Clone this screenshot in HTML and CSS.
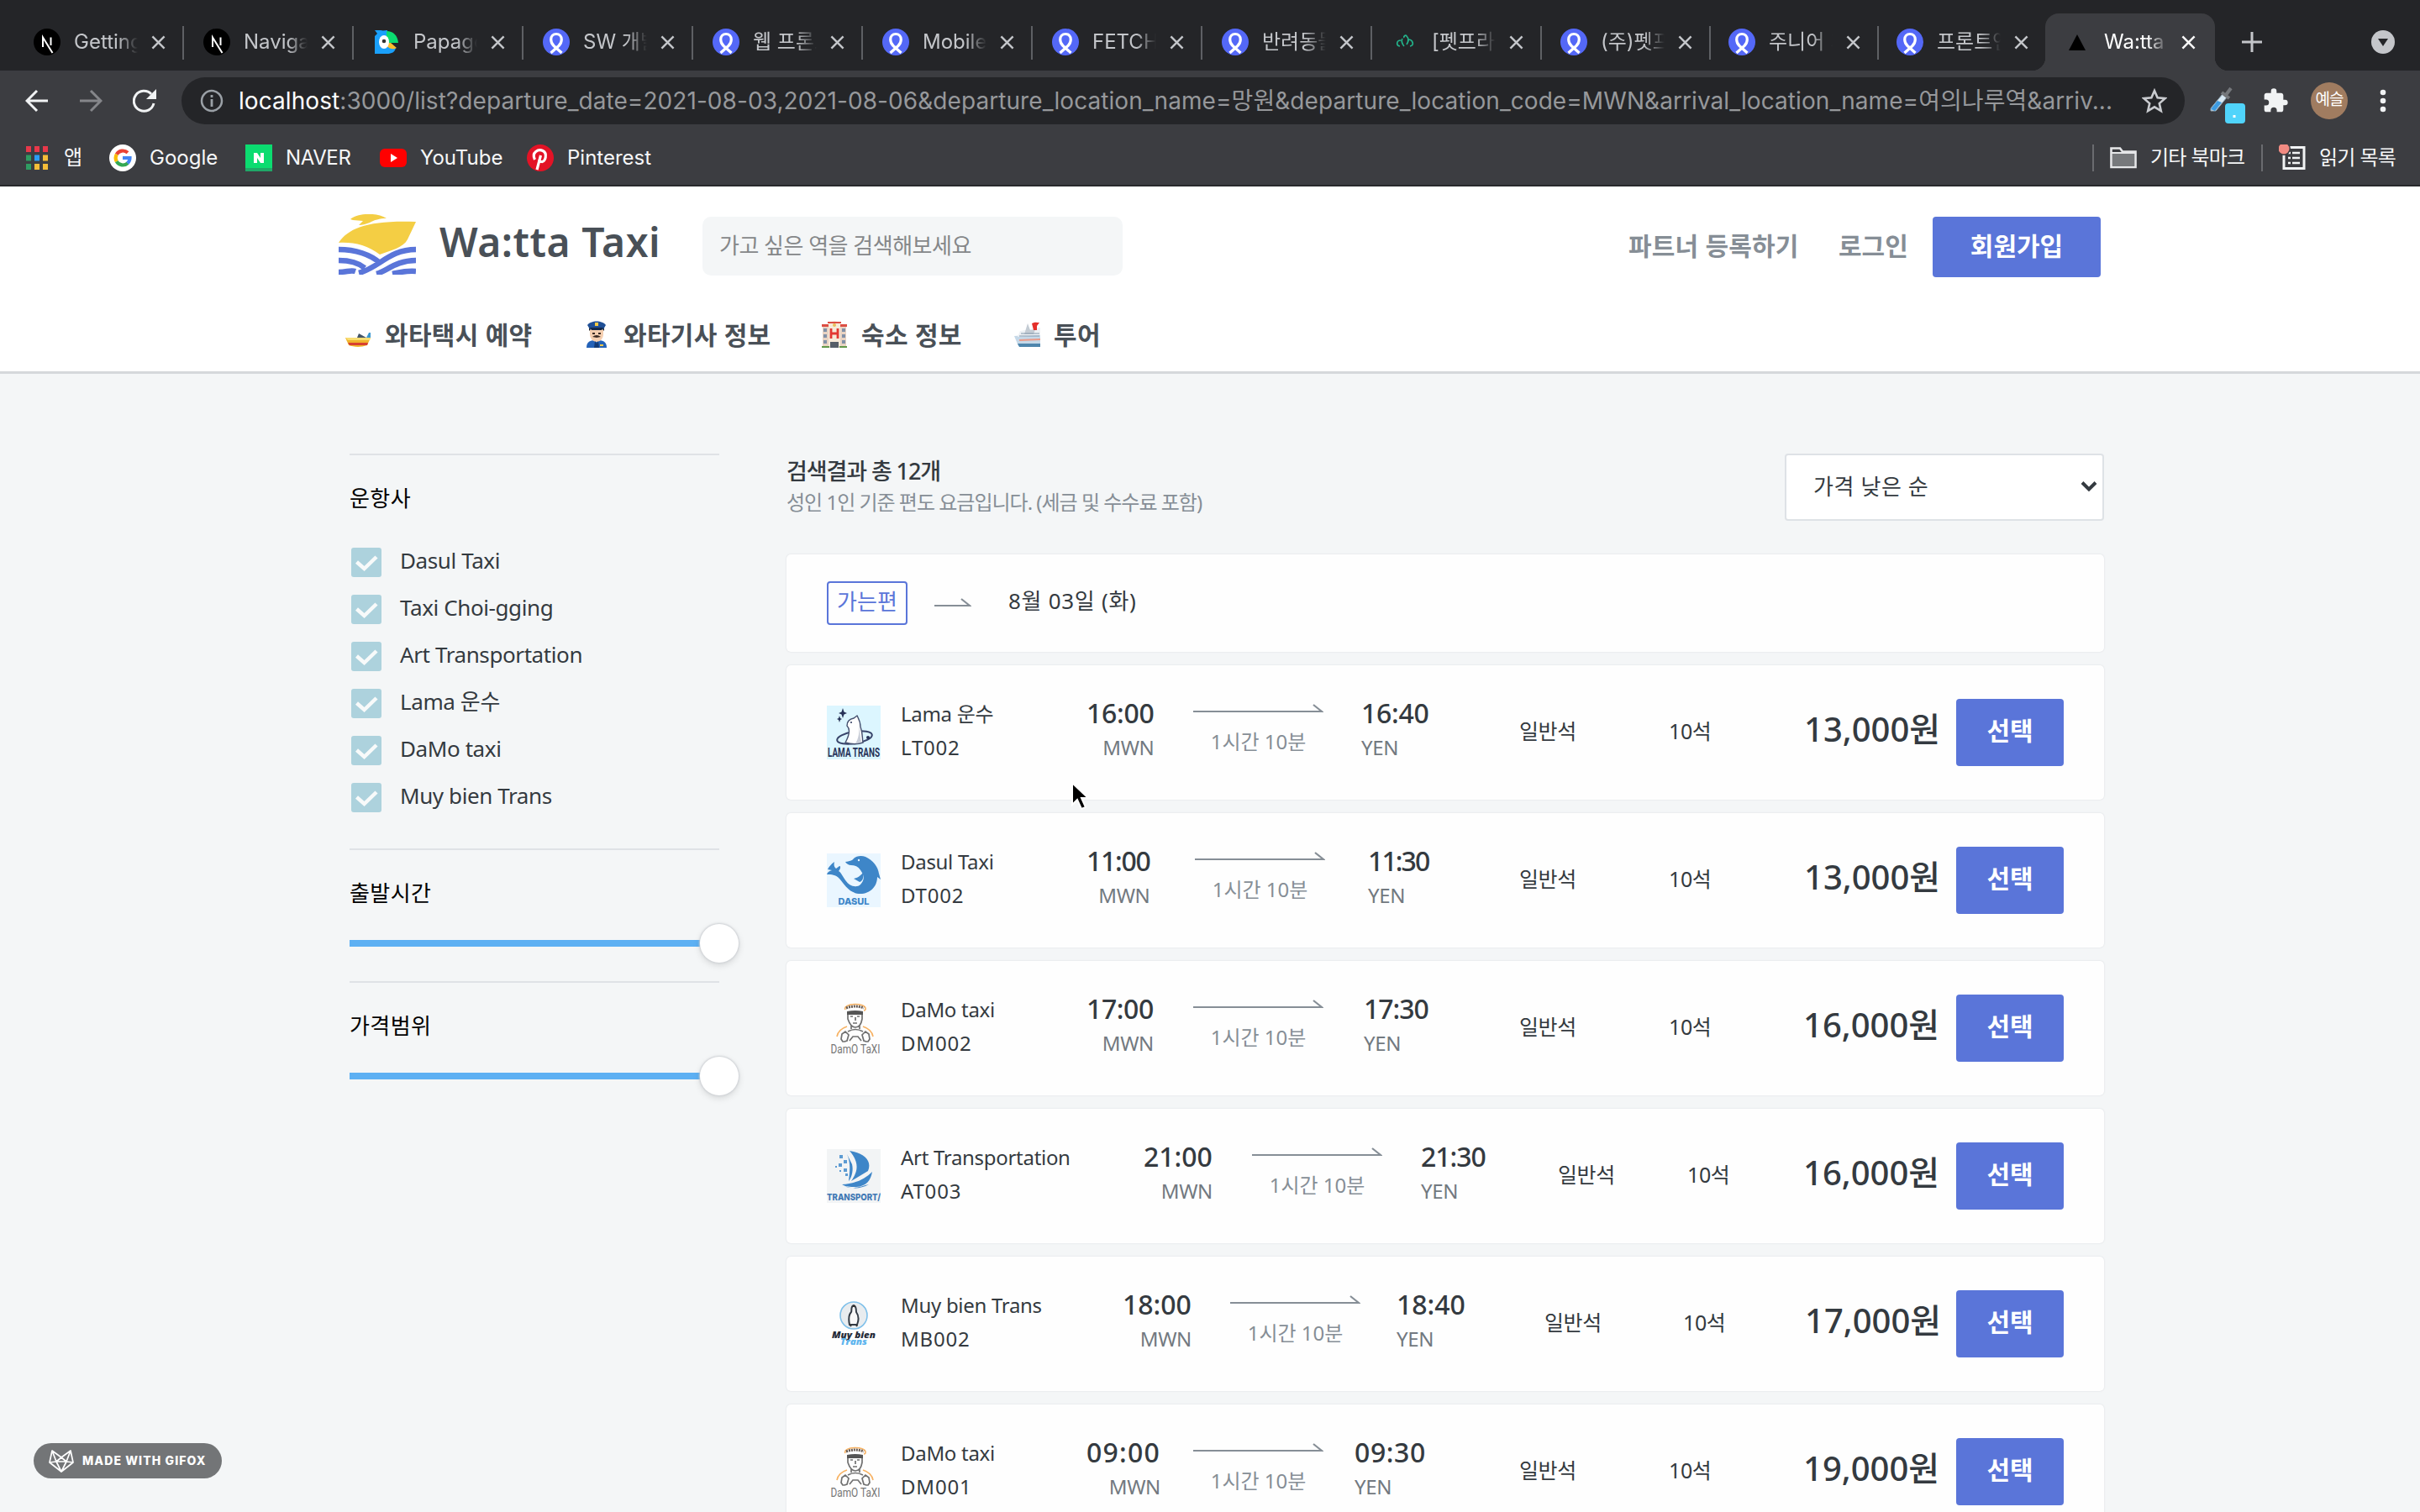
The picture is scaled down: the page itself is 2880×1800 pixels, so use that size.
FILE: index.html
```html
<!DOCTYPE html>
<html lang="ko">
<head>
<meta charset="utf-8">
<title>Wa:tta Taxi</title>
<link rel="stylesheet" href="styles.css">
</head>
<body>
<svg class="defs" width="0" height="0">
  <symbol id="x" viewBox="0 0 18 18"><path d="M1.5 1.5l15 15M16.500 1.500l-15 15" fill="none" stroke="currentColor" stroke-width="2.600"/></symbol>
  <symbol id="next" viewBox="0 0 32 32"><circle cx="16" cy="16" r="16" fill="#000"/><path d="M11 22V10.500L22.500 29M20.500 10.500V20" fill="none" stroke="#fff" stroke-width="2"/></symbol>
  <symbol id="rocket" viewBox="0 0 32 32"><circle cx="16" cy="16" r="16" fill="#5468f7"/><path d="M9.500 29L19 20.500c2.500-2.500 3.300-5 3.300-7.500 0-4-2.500-6.500-6.300-6.500S9.700 9 9.700 13c0 2.500.8 5 3.300 7.500L22.500 29" fill="none" stroke="#fff" stroke-width="3.200"/></symbol>
  <symbol id="papago" viewBox="0 0 32 32"><path d="M2 2h7c3 1 5 0 8 0v14l6 8c2 0 4-1 4-1-1 5-5 7-10 7H2V9L5 6z" fill="#1aa0fb"/><path d="M16 3c8 0 13 5 14 14H16z" fill="#0bdc70"/><path d="M16 17h5l7 6c-5 3-9 0-12-2z" fill="#fdbd2c"/><ellipse cx="13" cy="16" rx="6" ry="8" fill="#fff"/><circle cx="13" cy="15" r="2.300" fill="#333"/></symbol>
  <symbol id="leaf" viewBox="0 0 32 32"><path d="M15 11c-1-2 2-4 3-2 3 3 2 7 0 10M13 12c-2 2 0 7 2 9M11 14c-5 0-6 6-1 7M20 13c5 0 8 7 2 8" fill="none" stroke="#23b58c" stroke-width="1.700"/></symbol>
  <symbol id="wattalogo" viewBox="0 0 92 72"><path d="M0 34C12 16 36 7 92 9L82 30C77 40 62 43 49 48C34 37 18 33 0 34z" fill="#f4ce44"/><path d="M14 6c8-7 30-9 43-1-8 0-15 2-20 5-5 2-9 3-13 3l5-5-12-1z" fill="#f4ce44"/><g fill="none" stroke="#5a75d9" stroke-width="6.500"><path d="M0 42c20 0 38 6 49 16M92 42C60 42 48 64 24 70M0 55c14 0 25 4 31 9M92 55C68 55 57 68 45 71M0 69c10 0 14-3 20-1M92 68c-12-1-18 1-28 3"/></g></symbol>
  <symbol id="half" viewBox="0 0 155 12"><path d="M0 10H153L143 2" fill="none" stroke="#868e96" stroke-width="2.200"/></symbol>
  <symbol id="check" viewBox="0 0 36 35"><rect width="36" height="35" rx="3" fill="#add2dd"/><path d="M6.500 17l9 8L30 11" fill="none" stroke="#f8fafa" stroke-width="4.500"/></symbol>
</svg>

<div class="browser">
  <div class="tabs">
    <div class="tab"><svg class="fav"><use href="#next"/></svg><span>Getting</span><svg class="x"><use href="#x"/></svg></div>
    <div class="tab"><svg class="fav"><use href="#next"/></svg><span>Naviga</span><svg class="x"><use href="#x"/></svg></div>
    <div class="tab"><svg class="fav"><use href="#papago"/></svg><span>Papago</span><svg class="x"><use href="#x"/></svg></div>
    <div class="tab"><svg class="fav"><use href="#rocket"/></svg><span>SW 개발</span><svg class="x"><use href="#x"/></svg></div>
    <div class="tab"><svg class="fav"><use href="#rocket"/></svg><span>웹 프론트</span><svg class="x"><use href="#x"/></svg></div>
    <div class="tab"><svg class="fav"><use href="#rocket"/></svg><span>Mobile</span><svg class="x"><use href="#x"/></svg></div>
    <div class="tab"><svg class="fav"><use href="#rocket"/></svg><span>FETCH</span><svg class="x"><use href="#x"/></svg></div>
    <div class="tab"><svg class="fav"><use href="#rocket"/></svg><span>반려동물</span><svg class="x"><use href="#x"/></svg></div>
    <div class="tab"><svg class="fav"><use href="#leaf"/></svg><span>[펫프라이</span><svg class="x"><use href="#x"/></svg></div>
    <div class="tab tab-b"><svg class="fav"><use href="#rocket"/></svg><span>(주)펫프</span><svg class="x"><use href="#x"/></svg></div>
    <div class="tab tab-c"><svg class="fav"><use href="#rocket"/></svg><span>주니어 개</span><svg class="x"><use href="#x"/></svg></div>
    <div class="tab tab-c tab-last"><svg class="fav"><use href="#rocket"/></svg><span>프론트엔</span><svg class="x"><use href="#x"/></svg></div>
    <div class="tab tab-c tab-active"><svg class="fav" viewBox="0 0 32 32"><path d="M16 7L6 26h20z" fill="#000"/></svg><span>Wa:tta T</span><svg class="x"><use href="#x"/></svg></div>
    <svg class="plus" viewBox="0 0 24 24"><path d="M12 0v24M0 12h24" stroke="#c4c6ca" stroke-width="3"/></svg>
    <svg class="more" viewBox="0 0 28 28"><circle cx="14" cy="14" r="14" fill="#c4c6ca"/><path d="M8 10h12l-6 9z" fill="#242528"/></svg>
  </div>

  <div class="toolbar">
    <svg class="arrow" viewBox="0 0 28 28"><path d="M27 14H3M14 2L2 14l12 12" fill="none" stroke="#f1f3f4" stroke-width="3"/></svg>
    <svg class="arrow" viewBox="0 0 28 28"><path d="M1 14h24M14 2l12 12-12 12" fill="none" stroke="#85868a" stroke-width="3"/></svg>
    <svg class="arrow" viewBox="0 0 28 28"><path d="M25 17a12 12 0 1 1-3-11" fill="none" stroke="#f1f3f4" stroke-width="3"/><path d="M28 0v12H16z" fill="#f1f3f4"/></svg>
    <div class="address">
      <svg class="info" viewBox="0 0 28 28"><circle cx="14" cy="14" r="12" fill="none" stroke="#9aa0a6" stroke-width="2.500"/><path d="M14 12v9M14 7v3" stroke="#9aa0a6" stroke-width="2.800"/></svg>
      <span class="url"><b>localhost</b>:3000/list?departure_date=2021-08-03,2021-08-06&amp;departure_location_name=망원&amp;departure_location_code=MWN&amp;arrival_location_name=여의나루역&amp;arriv...</span>
      <svg class="star" viewBox="0 0 30 30"><path d="M15 3l3.600 8.300 9 .8-6.800 6 2 8.900L15 22.300 7.200 27l2-8.900-6.800-6 9-.8z" fill="none" stroke="#c9cbcf" stroke-width="2.600"/></svg>
    </div>
    <svg class="dropper" viewBox="0 0 44 46"><path d="M3 28L17 11l5 4L9 31H3z" fill="#d8e9f4" stroke="#8aa0ae"/><path d="M3 29l8-10 5 2-8 10z" fill="#3e9be0"/><path d="M16 9l9 7M21 12l6-8" stroke="#74777b" stroke-width="4" fill="none"/><rect x="20" y="22" width="24" height="24" rx="4" fill="#50d4fb"/><path d="M31 36v3" stroke="#fff" stroke-width="3"/></svg>
    <svg class="puzzle" viewBox="0 0 24 24"><path d="M20.500 11H19V7c0-1.100-.9-2-2-2h-4V3.500a2.500 2.500 0 0 0-5 0V5H4c-1.100 0-2 .9-2 2v3.800h1.500a2.700 2.700 0 0 1 0 5.400H2V20c0 1.100.9 2 2 2h3.800v-1.500a2.700 2.700 0 0 1 5.400 0V22H17c1.100 0 2-.9 2-2v-4h1.500a2.500 2.500 0 0 0 0-5z" fill="#f1f3f4"/></svg>
    <span class="avatar">예슬</span>
    <svg class="kebab" viewBox="0 0 8 28"><circle cx="4" cy="4" r="3.300"/><circle cx="4" cy="14" r="3.300"/><circle cx="4" cy="24" r="3.300"/></svg>
  </div>

  <div class="bookmarks">
    <svg class="apps" viewBox="0 0 26 28"><path d="M0 0h6v7H0zM10 0h6v7h-6zM20 0h6v7h-6z" fill="#e8384a"/><path d="M0 10.500h6v7H0zM0 21h6v7H0z" fill="#2f9c62"/><path d="M10 10.500h6v7h-6z" fill="#2b9df4"/><path d="M20 10.500h6v7h-6zM10 21h6v7h-6zM20 21h6v7h-6z" fill="#f6bd38"/></svg>
    <span class="bm-apps">앱</span>
    <svg class="bm-ic" viewBox="0 0 32 32"><circle cx="16" cy="16" r="16" fill="#fff"/><g fill="none" stroke-width="4.200"><path d="M8.800 11.800A8.500 8.500 0 0 1 22 9.800" stroke="#ea4335"/><path d="M8.800 20.200a8.500 8.500 0 0 1 0-8.400" stroke="#fbbc05"/><path d="M22 22.200A8.500 8.500 0 0 1 8.800 20.200" stroke="#34a853"/><path d="M16 16h8.500a8.500 8.500 0 0 1-2.700 6.200" stroke="#4285f4"/></g></svg>
    <span class="bm-google">Google</span>
    <svg class="bm-ic" viewBox="0 0 32 32"><path d="M0 0h32v32H0z" fill="#0bdc70"/><path d="M0 28h32v4H0z" fill="#20a868"/><path d="M10 22V10h4l4 6v-6h4v12h-4l-4-6v6z" fill="#fff"/></svg>
    <span class="bm-naver">NAVER</span>
    <svg class="bm-ic" viewBox="0 0 32 32"><rect y="5" width="32" height="22" rx="6" fill="#f00"/><path d="M13 11l8 5-8 5z" fill="#fff"/></svg>
    <span class="bm-yt">YouTube</span>
    <svg class="bm-ic" viewBox="0 0 32 32"><circle cx="16" cy="16" r="16" fill="#e31326"/><path d="M12 30l4.500-17M9.500 18C5 9 14 5 19 7.500c6 3 3 14-1.500 13-2 0-3-1.500-3-2" fill="none" stroke="#fff" stroke-width="3.200"/></svg>
    <span>Pinterest</span>
    <div class="bm-right">
      <i></i>
      <svg class="bm-ic folder" viewBox="0 0 32 32"><path d="M1.500 27V4.500H12l3 4h15.500V27z" fill="none" stroke="#e6e7e9" stroke-width="2.600"/><path d="M3 11h26v15H3z" fill="#77797c"/><path d="M2 10h28" stroke="#e6e7e9" stroke-width="2"/></svg>
      <span class="bm-other">기타 북마크</span>
      <i></i>
      <svg class="bm-ic list" viewBox="0 0 32 32"><path d="M6 3.500h24v25H6z" fill="none" stroke="#f1f3f4" stroke-width="3"/><path d="M11 10h3M16 10h9M11 16h3M16 16h9M11 22h3M16 22h9" stroke="#f1f3f4" stroke-width="2.500"/><circle cx="6" cy="5" r="8" fill="#3c3d41"/><circle cx="6" cy="5" r="6.500" fill="#f28b82"/></svg>
      <span class="bm-read">읽기 목록</span>
    </div>
  </div>
</div>

<header class="site">
  <div class="top">
    <svg class="logo"><use href="#wattalogo"/></svg>
    <h1>Wa:tta Taxi</h1>
    <div class="search">가고 싶은 역을 검색해보세요</div>
    <a class="link partner">파트너 등록하기</a>
    <a class="link login">로그인</a>
    <a class="signup">회원가입</a>
  </div>
  <nav>
    <svg class="emo" viewBox="0 0 32 32"><path d="M1 20h30l-4 9c-8 3-17 2-22 0z" fill="#f0b52c"/><path d="M1 20h30l-1 3H4z" fill="#f8dd72"/><path d="M4 26h24l-1 3H6z" fill="#d8402f"/><path d="M15 20l2-5 9 5z" fill="#456"/><path d="M26 20l3-6h2v6z" fill="#3b97cf"/></svg>
    <span class="n1">와타택시 예약</span>
    <svg class="emo" viewBox="0 0 32 32"><path d="M4 32c0-8 5-9 12-9s12 1 12 9z" fill="#2462b8"/><path d="M8 8h16v8c0 5-4 9-8 9s-8-4-8-9z" fill="#f5cfb0"/><path d="M7 8h18v4l-2-2H9l-2 2z" fill="#222"/><path d="M5 5c4-6 18-6 22 0l-3 5H8z" fill="#1f4f96"/><path d="M8 8h16l-2 3H10z" fill="#15294a"/><path d="M14 2h4v4h-4zM20 28h4v2h-4z" fill="#f5c944"/><path d="M11 19q5-4 10 0l-5 1zM11 14h3v2h-3zM18 14h3v2h-3z" fill="#3b2b24"/><path d="M14 24l2 3 2-3 1 8h-6z" fill="#123a75"/></svg>
    <span class="n2">와타기사 정보</span>
    <svg class="emo" viewBox="0 0 32 32"><path d="M2 5h28v27H2z" fill="#e9d3c3"/><path d="M9 2l7-2 7 2v30H9z" fill="#f6ead9"/><path d="M1 4h8v3H1zM23 4h8v3h-8zM8 1h16v2H8z" fill="#dc4e43"/><path d="M3 9h4v4H3zM3 16h4v4H3zM3 23h4v4H3zM25 9h4v4h-4zM25 16h4v4h-4zM25 23h4v4h-4z" fill="#8292a8"/><path d="M12 9v12M20 9v12M12 15h8" stroke="#e33832" stroke-width="2.800"/><circle cx="16" cy="5" r="2" fill="#e9bd58"/><path d="M11 25h10v7H11z" fill="#555e68"/><path d="M1 30h9v2H1zM22 30h9v2h-9z" fill="#62994a"/></svg>
    <span class="n3">숙소 정보</span>
    <svg class="emo" viewBox="0 0 32 32"><path d="M1 18l31-2v14H6z" fill="#c5d8e8"/><path d="M5 27h27v4H7z" fill="#4f86ad"/><path d="M8 12l24-4v9L5 19z" fill="#edf1f5"/><path d="M17 3l3 8 6-1-2 6H13z" fill="#c4ccd4"/><path d="M22 3c4-2 6-1 9-1l-3 4v5h-4z" fill="#e42f2a"/><path d="M7 23l25-1" stroke="#eb9a88" stroke-width="2"/><path d="M9 15h22M7 18h24" stroke="#8297ab" stroke-width="1"/></svg>
    <span>투어</span>
  </nav>
</header>

<main>
  <aside>
    <section class="companies">
      <h3>운항사</h3>
      <label><svg><use href="#check"/></svg>Dasul Taxi</label>
      <label><svg><use href="#check"/></svg>Taxi Choi-gging</label>
      <label><svg><use href="#check"/></svg>Art Transportation</label>
      <label><svg><use href="#check"/></svg>Lama 운수</label>
      <label><svg><use href="#check"/></svg>DaMo taxi</label>
      <label><svg><use href="#check"/></svg>Muy bien Trans</label>
    </section>
    <section class="range"><h3>출발시간</h3><div class="slider"><b></b></div></section>
    <section class="range"><h3>가격범위</h3><div class="slider"><b></b></div></section>
  </aside>

  <div class="results">
    <div class="head">
      <div><h2>검색결과 총 12개</h2><p>성인 1인 기준 편도 요금입니다. (세금 및 수수료 포함)</p></div>
      <div class="select">가격 낮은 순<svg viewBox="0 0 20 14"><path d="M2 2.500l8 8 8-8" fill="none" stroke="#343a40" stroke-width="4"/></svg></div>
    </div>
    <div class="card date">
      <span class="badge">가는편</span>
      <svg viewBox="0 0 44 12"><path d="M0 10H42L32 2" fill="none" stroke="#868e96" stroke-width="2.200"/></svg>
      <span class="day">8월 03일 (화)</span>
    </div>
    <div class="card trip lt">
      <svg class="co" viewBox="0 0 64 64"><rect width="64" height="64" fill="#dcf6ff"/><path d="M19 3l1.500 4.500L24 9l-3.500 1.500L19 15l-1.500-4.500L14 9l3.500-1.500zM15 12l1 3 2 1-2 1-1 3-1-3-2-1 2-1z" fill="#273258"/><ellipse cx="33" cy="38" rx="21" ry="7" transform="rotate(-9 33 38)" fill="none" stroke="#39456b" stroke-width="2"/><path d="M22 44c5-9 6-16 2-20 0-5 2-8 8-9l4-3c2 4 4 7 4 13 3 8 2 14 3 19-8 3-14 2-21 0z" fill="#fff" stroke="#45516f" stroke-width="1.400"/><path d="M38 22c2 8 1 14 3 21l-7 2c4-6 5-14 4-23z" fill="#c9ced8"/><circle cx="29" cy="20" r="1" fill="#273258"/><circle cx="49" cy="38" r="2" fill="#273258"/><text x="32" y="61" textLength="62" lengthAdjust="spacingAndGlyphs" text-anchor="middle" font-family="Roboto, sans-serif" font-size="15" font-weight="700" fill="#273258">LAMA TRANS</text></svg>
      <div class="name"><span>Lama 운수</span><span>LT002</span></div>
      <div class="dep"><b>16:00</b><span>MWN</span></div>
      <div class="dur"><svg><use href="#half"/></svg><span>1시간 10분</span></div>
      <div class="arv"><b>16:40</b><span>YEN</span></div>
      <span class="seat">일반석</span><span class="left">10석</span><strong>13,000원</strong><a class="pick">선택</a>
    </div>
    <div class="card trip dt">
      <svg class="co" viewBox="0 0 64 64"><rect width="64" height="64" fill="#eaf6ff"/><path d="M22 10c5-1 8-1 10-4 3-3 9-4 14-2 9 4 15 12 16 20l2 7-4-3c0 12-9 20-20 20-13 0-19-11-25-18-5-5-9-5-15-5 1-3 3-4 6-5l-5-1c2-4 4-6 8-9-1 5 0 6 2 8l4-3c2 0 1 4-1 6 4 2 7 12 13 16 5 3 10 3 13 0 4-4 5-9 2-14-3-6-7-9-13-9-3 0-6-2-7-4z" fill="#3e86c8"/><path d="M32 30c5-1 7-3 11-7 1 5 0 10-4 11z" fill="#3e86c8"/><circle cx="38" cy="8" r="1.200" fill="#eaf6ff"/><text x="32" y="61" text-anchor="middle" font-family="Inter, sans-serif" font-size="10.500" font-weight="800" textLength="37" lengthAdjust="spacingAndGlyphs" fill="#3e86c8">DASUL</text></svg>
      <div class="name"><span>Dasul Taxi</span><span>DT002</span></div>
      <div class="dep"><b>11:00</b><span>MWN</span></div>
      <div class="dur"><svg><use href="#half"/></svg><span>1시간 10분</span></div>
      <div class="arv"><b>11:30</b><span>YEN</span></div>
      <span class="seat">일반석</span><span class="left">10석</span><strong>13,000원</strong><a class="pick">선택</a>
    </div>
    <div class="card trip dm">
      <svg class="co" viewBox="0 0 64 64"><path d="M22 10c-4-8 25-9 24-1 0 1-1 2-2 2M12 42c1-6 6-10 12-12M55 42c-1-6-6-10-12-12" fill="none" stroke="#f7b263" stroke-width="1.600"/><path d="M23 8q11-4 21 0" stroke="#665a52" fill="none" stroke-width="3" stroke-dasharray="2 1"/><path d="M24 12q10-2 19 0v4H24z" fill="#555"/><path d="M25 16v5c2 6 5 10 9 10s7-4 8-10v-5M29 29v4M39 29v4M28 18h3M36 18h3M34 19v4M31 26h5M19 48l-2-3 1-6 4-3 4 4-2 7-3 1zM49 48l2-3-1-6-4-3-4 4 2 7 3 1zM25 36q9-5 18 0M27 47l4-5h6l4 5" fill="none" stroke="#707070" stroke-width="1.700"/><text x="34" y="61.500" text-anchor="middle" font-family="Roboto, sans-serif" font-size="15" textLength="59" lengthAdjust="spacingAndGlyphs" fill="#777">DamO TaXI</text></svg>
      <div class="name"><span>DaMo taxi</span><span>DM002</span></div>
      <div class="dep"><b>17:00</b><span>MWN</span></div>
      <div class="dur"><svg><use href="#half"/></svg><span>1시간 10분</span></div>
      <div class="arv"><b>17:30</b><span>YEN</span></div>
      <span class="seat">일반석</span><span class="left">10석</span><strong>16,000원</strong><a class="pick">선택</a>
    </div>
    <div class="card trip at">
      <svg class="co" viewBox="0 0 64 64"><rect width="64" height="64" fill="#f2f4f5"/><path d="M27 2C45 5 54 14 49 26L29 38C39 24 37 14 27 2zM54 27c-2 11-7 17-19 18-7 0-12 0-17-3 16-1 27-6 36-15zM24 6l6 12c2 8-1 17-4 20 1-11 3-20-2-32zM21 44c10 5 20 0 29-2-9 5-19 6-29 2z" fill="#3e86c8"/><path d="M15 7h4v4h-4zM20 13h4v4h-4zM14 17h4v4h-4zM10 20h2v2h-2zM20 23h4v4h-4zM15 25h2v2h-2zM22 29h3v3h-3z" fill="#5d9bd2"/><text x="0" y="61" font-family="Inter, sans-serif" font-size="11" font-weight="800" textLength="64" lengthAdjust="spacingAndGlyphs" fill="#3e78b4">TRANSPORT/</text></svg>
      <div class="name"><span>Art Transportation</span><span>AT003</span></div>
      <div class="dep"><b>21:00</b><span>MWN</span></div>
      <div class="dur"><svg><use href="#half"/></svg><span>1시간 10분</span></div>
      <div class="arv"><b>21:30</b><span>YEN</span></div>
      <span class="seat">일반석</span><span class="left">10석</span><strong>16,000원</strong><a class="pick">선택</a>
    </div>
    <div class="card trip mb">
      <svg class="co" viewBox="0 0 64 64"><circle cx="32" cy="22" r="16" fill="#e8ecef" stroke="#7fc0ea" stroke-width="1.600"/><path d="M32 10c-4 1-2 7-3 8-4 4-3 10-2 15h9c2-5 2-11-1-15 0-3 0-7-3-8z" fill="#f8f8f8" stroke="#333b45" stroke-width="2"/><path d="M29 33l-1 2M35 33l1 2M31 11h3" stroke="#333" stroke-width="2"/><text x="32" y="49" text-anchor="middle" font-family="Open Sans, sans-serif" font-size="11" font-weight="800" font-style="italic" textLength="52" lengthAdjust="spacingAndGlyphs" fill="#252b38">Muy bien</text><text x="32" y="57" text-anchor="middle" font-family="Open Sans, sans-serif" font-size="10" font-weight="800" font-style="italic" textLength="32" lengthAdjust="spacingAndGlyphs" fill="#5db5ee">Trans</text></svg>
      <div class="name"><span>Muy bien Trans</span><span>MB002</span></div>
      <div class="dep"><b>18:00</b><span>MWN</span></div>
      <div class="dur"><svg><use href="#half"/></svg><span>1시간 10분</span></div>
      <div class="arv"><b>18:40</b><span>YEN</span></div>
      <span class="seat">일반석</span><span class="left">10석</span><strong>17,000원</strong><a class="pick">선택</a>
    </div>
    <div class="card trip dm1">
      <svg class="co" viewBox="0 0 64 64"><path d="M22 10c-4-8 25-9 24-1 0 1-1 2-2 2M12 42c1-6 6-10 12-12M55 42c-1-6-6-10-12-12" fill="none" stroke="#f7b263" stroke-width="1.600"/><path d="M23 8q11-4 21 0" stroke="#665a52" fill="none" stroke-width="3" stroke-dasharray="2 1"/><path d="M24 12q10-2 19 0v4H24z" fill="#555"/><path d="M25 16v5c2 6 5 10 9 10s7-4 8-10v-5M29 29v4M39 29v4M28 18h3M36 18h3M34 19v4M31 26h5M19 48l-2-3 1-6 4-3 4 4-2 7-3 1zM49 48l2-3-1-6-4-3-4 4 2 7 3 1zM25 36q9-5 18 0M27 47l4-5h6l4 5" fill="none" stroke="#707070" stroke-width="1.700"/><text x="34" y="61.500" text-anchor="middle" font-family="Roboto, sans-serif" font-size="15" textLength="59" lengthAdjust="spacingAndGlyphs" fill="#777">DamO TaXI</text></svg>
      <div class="name"><span>DaMo taxi</span><span>DM001</span></div>
      <div class="dep"><b>09:00</b><span>MWN</span></div>
      <div class="dur"><svg><use href="#half"/></svg><span>1시간 10분</span></div>
      <div class="arv"><b>09:30</b><span>YEN</span></div>
      <span class="seat">일반석</span><span class="left">10석</span><strong>19,000원</strong><a class="pick">선택</a>
    </div>
  </div>
</main>

<svg class="cursor" viewBox="0 0 24 36"><path d="M2 2v26l6-6 5 11 5-2-5-11h8z" fill="#000" stroke="#fff" stroke-width="2"/></svg>
<div class="gifox">
  <svg viewBox="0 0 32 28"><path d="M5 2l11 8L27 2l3 14-14 11L2 16zM5 2l5 13 6-5 6 5 5-13M2 16l8-1 6 12 6-12 8 1M10 15h12" fill="none" stroke="#fff" stroke-width="1.700" stroke-linejoin="round"/></svg>
  <span>MADE WITH GIFOX</span>
</div>
</body>
</html>
```
FILE: styles.css
```css
* { box-sizing: border-box; }
body {
  margin: 0;
  width: 2880px;
  height: 1800px;
  overflow: hidden;
  position: relative;
  background: #f4f6f7;
  color: #343a40;
  font: 26px/36px "Noto Sans", "Noto Sans CJK KR", sans-serif;
  white-space: nowrap;
}
.defs { position: absolute; }
svg { display: block; flex: none; }
h1, h2, h3, p { margin: 0; }

/* browser window */
.browser { height: 222px; background: #3c3d41; border-bottom: 2px solid #28292c; font-family: Inter, "Noto Sans CJK KR", sans-serif; }
.tabs { display: flex; height: 84px; padding: 16px 0 0 16px; background: #242528; }
.tab { display: flex; align-items: center; width: 202px; height: 68px; padding-left: 24px; color: #c4c6ca; font-size: 24px; position: relative; }
.tab::after { content: ""; position: absolute; right: -1px; top: 15px; width: 2px; height: 40px; background: #5e6064; }
.tab-b { width: 201px; padding-left: 23px; }
.tab-c { width: 200px; padding-left: 22px; }
.tab-last::after, .tab-active::after { display: none; }
.tab-active { width: 202px; margin-left: -1px; background: #3c3d41; border-radius: 16px 16px 0 0; color: #fff; }
.tab-active::before {
  content: ""; position: absolute; left: -16px; right: -16px; bottom: 0; height: 16px;
  background: radial-gradient(circle at 0 0, transparent 16px, #3c3d41 16.500px) left / 16px 16px no-repeat,
    radial-gradient(circle at 100% 0, transparent 16px, #3c3d41 16.500px) right / 16px 16px no-repeat;
}
.fav { width: 32px; height: 32px; }
.tab span { width: 76px; margin: 0 16px; overflow: hidden; -webkit-mask-image: linear-gradient(90deg, #000 52px, transparent 76px); mask-image: linear-gradient(90deg, #000 52px, transparent 76px); }
.x { width: 17px; height: 17px; }
.plus { width: 24px; height: 24px; margin: 22px 0 0 32px; }
.more { width: 28px; height: 28px; margin: 20px 30px 0 auto; }
.toolbar { display: flex; align-items: center; height: 72px; padding: 0 40px 0 30px; }
.arrow { width: 28px; height: 28px; margin-right: 36px; }
.address { display: flex; align-items: center; width: 2384px; height: 56px; margin-left: -6px; padding: 0 21px; border-radius: 28px; background: #242528; }
.info { width: 28px; height: 28px; margin: 0 18px 0 1px; }
.url { flex: 1; font-size: 28px; color: #96989b; letter-spacing: .070px; }
.url b { font-weight: 400; color: #fff; }
.star { width: 30px; height: 30px; }
.dropper { width: 44px; height: 46px; margin: 8px 0 0 28px; }
.puzzle { width: 32px; height: 32px; margin-left: 20px; }
.avatar { width: 44px; height: 44px; margin: 0 0 0 26px; border-radius: 50%; background: #a07c60; color: #fff; font-size: 19px; line-height: 42px; text-align: center; letter-spacing: -1px; }
.kebab { width: 8px; height: 28px; margin-left: 38px; fill: #f1f3f4; }
.bookmarks { display: flex; align-items: center; height: 64px; padding: 0 28px 0 31px; font-size: 24px; color: #f6f7f8; }
.apps { width: 26px; height: 28px; margin-right: 19px; }
.bm-ic { width: 32px; height: 32px; margin-right: 16px; }
.bm-apps { width: 54px; }
.bm-google { width: 114px; }
.bm-naver { width: 112px; letter-spacing: -.4px; }
.bm-yt { width: 127px; }
.bm-right { display: flex; align-items: center; margin-left: auto; }
.bm-right i { width: 2px; height: 32px; background: #6a6b6f; margin-right: 19px; }
.bm-other { width: 132px; letter-spacing: -.8px; }
.bm-read { width: 92px; letter-spacing: -.8px; }

/* site header */
.site { height: 223px; background: #fff; border-bottom: 3px solid #d5d8db; padding: 33px 380px 0 403px; }
.top { display: flex; height: 75px; }
.logo { width: 92px; height: 72px; }
h1 { width: 313px; margin-left: 28px; color: #495057; font-size: 48px; line-height: 66px; font-weight: 600; letter-spacing: .5px; }
.search { width: 500px; height: 70px; margin-top: 3px; padding-left: 20px; border-radius: 10px; background: #f4f6f7; color: #858789; line-height: 68px; letter-spacing: -.5px; }
.link { margin-top: 3px; color: #868e96; font-size: 30px; line-height: 70px; font-weight: 600; }
.partner { margin-left: 602px; width: 250px; letter-spacing: .2px; }
.login { width: 112px; }
.signup { width: 200px; height: 72px; margin-top: 3px; border-radius: 4px; background: #5a75d9; color: #fff; font-size: 30px; font-weight: 700; line-height: 70px; text-align: center; }
nav { display: flex; height: 115px; padding: 52px 0 0 7px; color: #495057; font-size: 30px; font-weight: 600; line-height: 34px; letter-spacing: .3px; }
.emo { width: 32px; height: 32px; margin: 0 16px 0 0; }
.n1 { width: 236px; }
.n2 { width: 235px; }
.n3 { width: 181px; }

/* filters */
main { display: flex; padding: 95px 0 0 416px; }
aside { width: 440px; color: #343a40; }
section { border-top: 2px solid #dfe2e6; }
h3 { font-size: 26px; line-height: 36px; font-weight: 400; color: #000; letter-spacing: .4px; }
.companies { height: 470px; padding-top: 33px; }
.companies h3 { margin-bottom: 36px; }
label { display: flex; height: 56px; line-height: 40px; letter-spacing: -.4px; }
label svg { width: 36px; height: 35px; margin: 5px 22px 0 2px; }
.range { height: 158px; padding-top: 33px; }
.slider { display: flex; justify-content: flex-end; align-items: center; height: 8px; margin-top: 38px; background: #5db0f3; }
.slider b { flex: none; width: 46px; height: 46px; margin-right: -23px; border-radius: 50%; background: #fff; box-shadow: 0 0 2px 1px #cfd2d6, 0 3px 8px #0002; }

/* results */
.results { width: 1568px; margin-left: 80px; }
.head { display: flex; justify-content: space-between; height: 120px; }
h2 { margin-top: 2px; font-size: 27px; line-height: 38px; font-weight: 500; letter-spacing: -1.100px; }
p { color: #868e96; font-size: 24px; line-height: 36px; letter-spacing: -1px; }
.select { display: flex; justify-content: space-between; align-items: center; width: 380px; height: 80px; padding: 0 6px 2px 32px; border: 2px solid #dee2e6; border-radius: 4px; background: #fff; letter-spacing: .6px; }
.select svg { width: 20px; height: 14px; }
.card { display: flex; height: 160px; margin-bottom: 16px; padding: 0 48px; background: #fefefe; border-radius: 5px; box-shadow: 0 0 2px #d4d8dc; }
.card.date { height: 116px; align-items: center; }
.badge { width: 96px; height: 52px; border: 2px solid #5a75d9; border-radius: 4px; color: #5a75d9; line-height: 44px; text-align: center; }
.date svg { width: 44px; height: 12px; margin: -3px 44px 0 32px; }
.day { margin-top: -7px; letter-spacing: .7px; }
.trip { display: grid; grid-template-rows: 160px; }
.co { width: 64px; height: 64px; margin-top: 48px; }
.name, .dep, .arv { display: flex; flex-direction: column; padding-top: 38px; line-height: 40px; }
.name { font-size: 24px; letter-spacing: -.3px; }
.name span + span { letter-spacing: .8px; }
.dep b, .arv b { font-size: 32px; font-weight: 500; line-height: 40px; margin-top: -1px; margin-bottom: 1px; }
.dep { text-align: right; justify-self: start; }
.dep span, .arv span { color: #727980; font-size: 24px; letter-spacing: -.4px; }
.dur { width: 155px; padding-top: 45px; text-align: center; color: #868e96; font-size: 24px; }
.dur svg { width: 155px; height: 12px; }
.dur span { display: block; line-height: 36px; padding-top: 16px; }
.seat, .left { font-size: 25px; line-height: 156px; letter-spacing: -.4px; }
strong { font-size: 40px; line-height: 152px; font-weight: 500; }
.pick { height: 80px; margin-top: 40px; border-radius: 4px; background: #5a75d9; color: #fff; font-size: 30px; font-weight: 700; line-height: 76px; text-align: center; }
.lt { grid-template-columns: 88px 221px 127px 200px 188px 178px 161px 181px 128px; }
.dt { grid-template-columns: 88px 221px 129px 206px 180px 178px 161px 181px 128px; }
.dm { grid-template-columns: 88px 221px 127px 203px 185px 178px 160px 182px 128px; }
.at { grid-template-columns: 88px 289px 129px 201px 163px 154px 138px 182px 128px; }
.mb { grid-template-columns: 88px 264px 128px 198px 176px 165px 145px 180px 128px; }
.dm1 { grid-template-columns: 88px 221px 127px 192px 196px 178px 160px 182px 128px; }
.lt b { letter-spacing: -.3px; }
.dt .dep b { letter-spacing: -1.300px; }
.dt .arv b { letter-spacing: -1.900px; }
.dm .dep b { letter-spacing: -.4px; }
.dm .arv b, .at .arv b { letter-spacing: -1px; }
.dm1 .dep b { letter-spacing: 1.200px; }
.dm1 .arv b { letter-spacing: .6px; }

/* overlays */
.cursor { position: absolute; left: 1274px; top: 930px; width: 24px; height: 36px; }
.gifox { position: absolute; left: 40px; top: 1718px; display: flex; align-items: center; width: 224px; height: 42px; padding-left: 17px; border-radius: 21px; background: #737577; color: #fff; font: 800 14px/42px Inter, sans-serif; letter-spacing: 1.100px; }
.gifox svg { width: 32px; height: 28px; margin-right: 9px; }
```
